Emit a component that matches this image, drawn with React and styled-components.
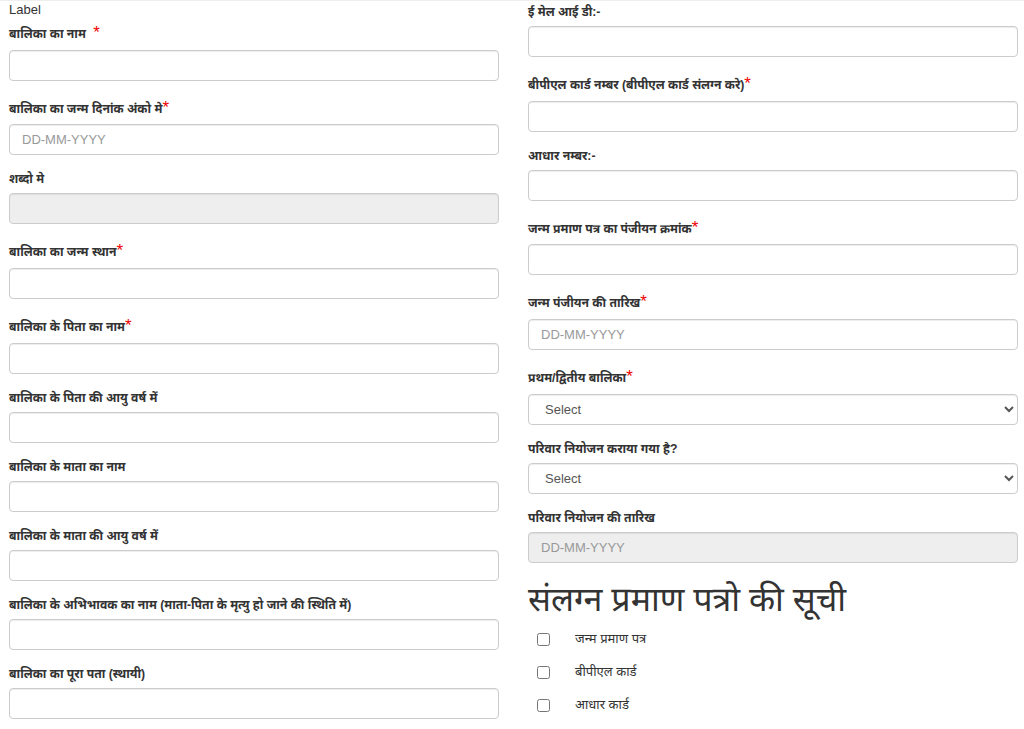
import styled, { createGlobalStyle } from "styled-components";

const GlobalStyle = createGlobalStyle`
  body {
    margin: 0;
    background: #fff;
    font-family: "Liberation Sans", "Noto Sans Devanagari", "Noto Sans", sans-serif;
    font-size: 13px;
    color: #333;
  }
  * { box-sizing: border-box; }
`;

const Page = styled.div`
  border-top: 1px solid #eee;
  display: grid;
  grid-template-columns: 490px 490px;
  column-gap: 29px;
  padding: 0 5px 0 9px;
`;

const Column = styled.div`
  display: flex;
  flex-direction: column;
`;

const PlainLabel = styled.div`
  font-size: 13px;
  line-height: 18px;
  color: #333;
`;

const FormGroup = styled.div`
  margin-bottom: 13px;
`;

const Label = styled.label`
  display: block;
  font-weight: bold;
  font-size: 12.2px;
  line-height: ${(p) => (p.$required ? "19.7px" : "18px")};
  padding-top: ${(p) => (p.$required ? "6px" : "2px")};
  margin-bottom: 5px;
  color: #333;
`;

const Star = styled.span`
  color: #e00;
  font-size: 17px;
  line-height: 0;
  font-weight: normal;
  margin-left: ${(p) => (p.$spaced ? "4px" : "0")};
`;

const Input = styled.input`
  display: block;
  width: 100%;
  height: 31px;
  padding: 6px 12px;
  font-family: "Liberation Sans", sans-serif;
  font-size: 13px;
  color: #555;
  background: ${(p) => (p.disabled ? "#eee" : "#fff")};
  border: 1px solid #ccc;
  border-radius: 4px;
  box-shadow: inset 0 1px 1px rgba(0, 0, 0, 0.075);
  &::placeholder {
    color: #999;
  }
`;

const Select = styled.select`
  display: block;
  width: 100%;
  height: 31px;
  padding: 5px 8px 5px 12px;
  font-family: "Liberation Sans", sans-serif;
  font-size: 13px;
  color: #555;
  background: #fff;
  border: 1px solid #ccc;
  border-radius: 4px;
  box-shadow: inset 0 1px 1px rgba(0, 0, 0, 0.075);
`;

const Heading = styled.h2`
  margin: 7px 0 0;
  font-size: 34px;
  font-weight: normal;
  line-height: 40px;
  color: #333;
  font-family: "Noto Sans Devanagari", "Noto Sans", sans-serif;
`;

const CheckRow = styled.label`
  display: flex;
  align-items: center;
  height: 33px;
  padding-left: 9px;
  font-size: 13px;
  color: #333;
`;

const Check = styled.input`
  width: 13px;
  height: 13px;
  margin: 0 25px 0 0;
`;

function Field({ label, required, spaced, placeholder, disabled }) {
  return (
    <FormGroup>
      <Label $required={required}>
        {label}
        {required && <Star $spaced={spaced}>*</Star>}
      </Label>
      <Input type="text" placeholder={placeholder} disabled={disabled} />
    </FormGroup>
  );
}

function SelectField({ label, required }) {
  return (
    <FormGroup>
      <Label $required={required}>
        {label}
        {required && <Star>*</Star>}
      </Label>
      <Select defaultValue="">
        <option value="">Select</option>
      </Select>
    </FormGroup>
  );
}

export default function App() {
  return (
    <>
      <GlobalStyle />
      <Page>
        <Column>
          <PlainLabel>Label</PlainLabel>
          <Field label="बालिका का नाम " required spaced />
          <Field label="बालिका का जन्म दिनांक अंको मे" required placeholder="DD-MM-YYYY" />
          <Field label="शब्दो मे" disabled />
          <Field label="बालिका का जन्म स्थान" required />
          <Field label="बालिका के पिता का नाम" required />
          <Field label="बालिका के पिता की आयु वर्ष में" />
          <Field label="बालिका के माता का नाम" />
          <Field label="बालिका के माता की आयु वर्ष में" />
          <Field label="बालिका के अभिभावक का नाम (माता-पिता के मृत्यु हो जाने की स्थिति में)" />
          <Field label="बालिका का पूरा पता (स्थायी)" />
        </Column>
        <Column>
          <Field label="ई मेल आई डी:-" />
          <Field label="बीपीएल कार्ड नम्बर (बीपीएल कार्ड संलग्न करे)" required />
          <Field label="आधार नम्बर:-" />
          <Field label="जन्म प्रमाण पत्र का पंजीयन क्रमांक" required />
          <Field label="जन्म पंजीयन की तारिख" required placeholder="DD-MM-YYYY" />
          <SelectField label="प्रथम/द्वितीय बालिका" required />
          <SelectField label="परिवार नियोजन कराया गया है?" />
          <Field label="परिवार नियोजन की तारिख" disabled placeholder="DD-MM-YYYY" />
          <Heading>संलग्न प्रमाण पत्रो की सूची</Heading>
          <CheckRow>
            <Check type="checkbox" />
            जन्म प्रमाण पत्र
          </CheckRow>
          <CheckRow>
            <Check type="checkbox" />
            बीपीएल कार्ड
          </CheckRow>
          <CheckRow>
            <Check type="checkbox" />
            आधार कार्ड
          </CheckRow>
        </Column>
      </Page>
    </>
  );
}
